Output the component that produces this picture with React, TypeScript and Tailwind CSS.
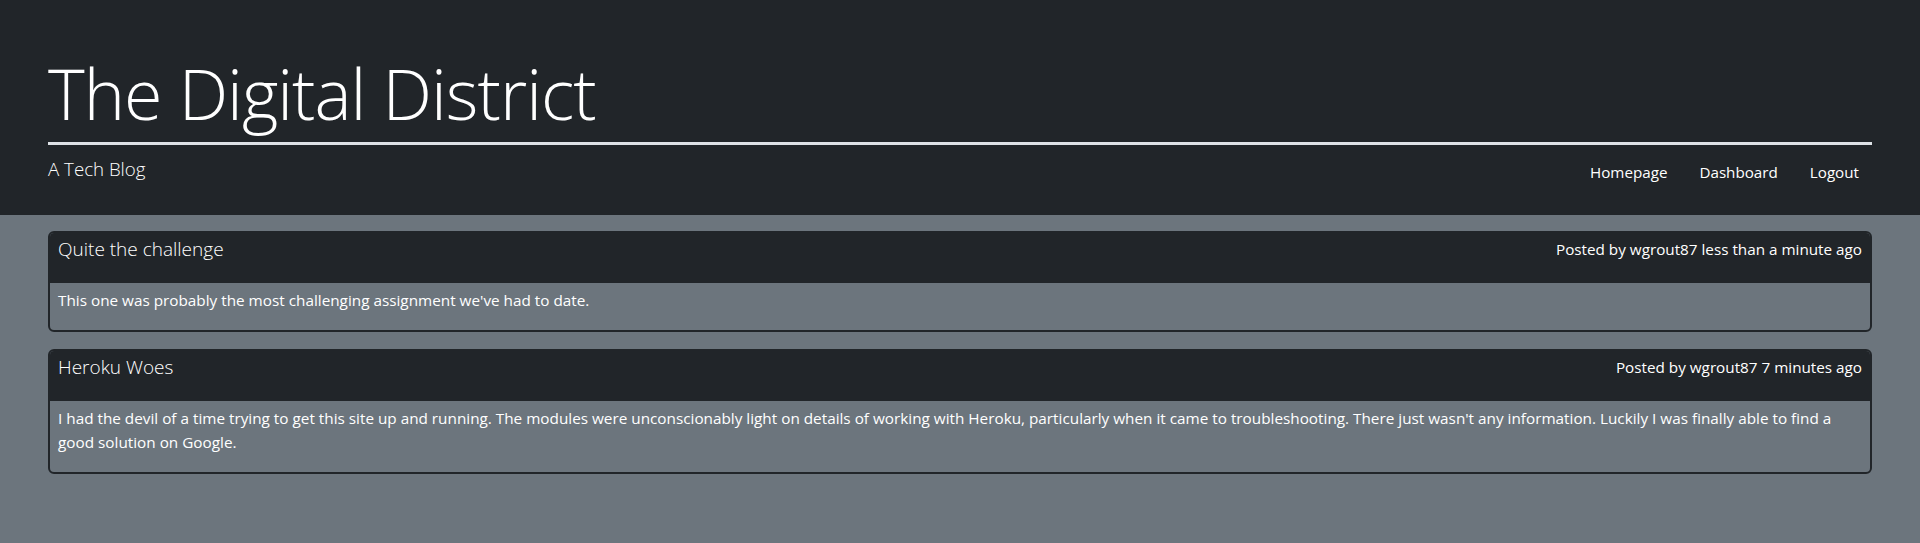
import React from 'react'

type Post = {
  id: number
  title: string
  author: string
  when: string
  body: string
}

const posts: Post[] = [
  {
    id: 1,
    title: 'Quite the challenge',
    author: 'wgrout87',
    when: 'less than a minute ago',
    body: "This one was probably the most challenging assignment we've had to date.",
  },
  {
    id: 2,
    title: 'Heroku Woes',
    author: 'wgrout87',
    when: '7 minutes ago',
    body: "I had the devil of a time trying to get this site up and running. The modules were unconscionably light on details of working with Heroku, particularly when it came to troubleshooting. There just wasn't any information. Luckily I was finally able to find a good solution on Google.",
  },
]

function PostCard({ post }: { post: Post }) {
  return (
    <article className="border-2 border-[#212529] rounded-md overflow-hidden">
      <div className="h-[50px] bg-[#212529] px-2 pt-1 flex justify-between items-start">
        <h2 className="text-[19px] font-light leading-6 text-white">{post.title}</h2>
        <p className="text-[15.25px] leading-6 text-white">
          Posted by {post.author} {post.when}
        </p>
      </div>
      <div className="px-2 pt-[5px] pb-[18px]">
        <p className="text-[15.3px] leading-6 text-white">{post.body}</p>
      </div>
    </article>
  )
}

export default function App() {
  return (
    <div className="min-h-screen bg-[#6c757d] font-['Open_Sans',sans-serif]">
      <header className="h-[215px] bg-[#212529] px-12 pt-[51px]">
        <h1 className="text-[70px] font-light leading-[84px] tracking-[-1px] text-white border-b-[3px] border-[#dee2e6] pb-[7px]">
          The Digital District
        </h1>
        <div className="flex justify-between items-start pt-[10px]">
          <p className="text-[18.7px] font-light leading-7 text-white">A Tech Blog</p>
          <nav className="flex pt-[5px]">
            <a className="px-4 text-[15.2px] leading-6 text-white" href="#">
              Homepage
            </a>
            <a className="px-4 text-[15.2px] leading-6 text-white" href="#">
              Dashboard
            </a>
            <a className="pl-4 pr-[13px] text-[15.2px] leading-6 text-white" href="#">
              Logout
            </a>
          </nav>
        </div>
      </header>
      <main className="px-12 pt-4 flex flex-col gap-[17px]">
        {posts.map((post) => (
          <PostCard key={post.id} post={post} />
        ))}
      </main>
    </div>
  )
}
